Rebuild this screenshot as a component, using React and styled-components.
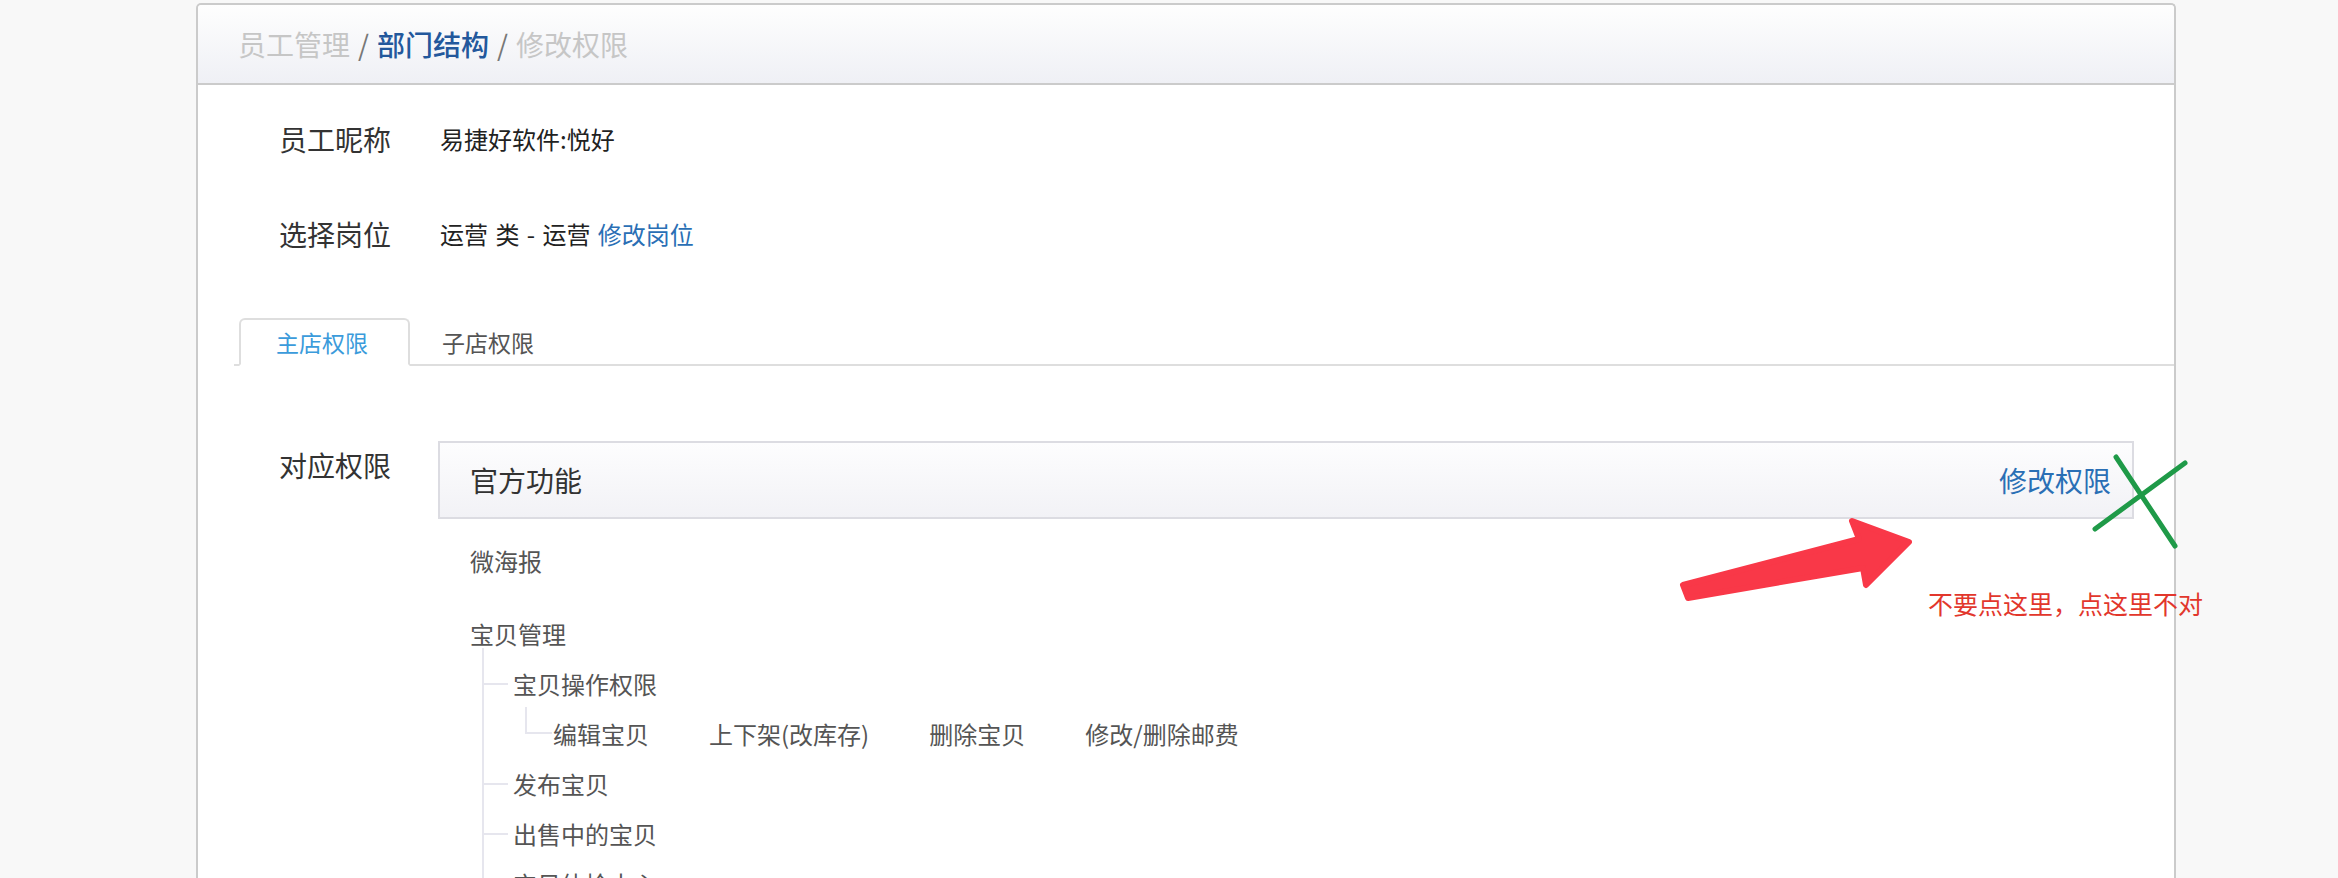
import React from 'react'
import styled, { createGlobalStyle } from 'styled-components'

const GlobalStyle = createGlobalStyle`
  html, body {
    margin: 0;
    padding: 0;
    background: #f8f8f8;
  }
  body {
    font-family: "Noto Sans CJK SC", "Noto Sans", sans-serif;
    overflow: hidden;
  }
`

const Page = styled.div`
  position: relative;
  height: 878px;
  overflow: hidden;
  padding-top: 3px;
  box-sizing: border-box;
`

const Panel = styled.section`
  margin-left: 196px;
  width: 1980px;
  min-height: 900px;
  background: #fff;
  border: 2px solid #cbcbcb;
  border-bottom: none;
  border-radius: 5px 5px 0 0;
  box-sizing: border-box;
`

const Header = styled.header`
  display: flex;
  align-items: center;
  height: 78px;
  padding-left: 40px;
  border-bottom: 2px solid #cbcbcb;
  border-radius: 4px 4px 0 0;
  background: linear-gradient(#fefefe, #eff0f5);
  font-size: 28px;
  line-height: 1;
`

const Crumb = styled.span`
  color: ${(p) => (p.$current ? '#23589c' : '#c6c6c6')};
  font-weight: ${(p) => (p.$current ? 500 : 400)};
`

const Slash = styled.span`
  color: #777;
  margin: 0 8px;
`

const Body = styled.div`
  padding: 6px 0 0 36px;
`

const FieldRow = styled.div`
  display: flex;
  align-items: center;
  height: 95px;
`

const Label = styled.div`
  width: 206px;
  padding-left: 45px;
  box-sizing: border-box;
  flex-shrink: 0;
  font-size: 28px;
  line-height: 48px;
  color: #333;
`

const Value = styled.div`
  font-size: 24px;
  color: #222;
  word-spacing: 2px;
`

const Link = styled.a`
  color: #2a6fb5;
  text-decoration: none;
  cursor: pointer;
`

const TabList = styled.div`
  display: flex;
  height: 46px;
  margin-top: 37px;
  border-bottom: 2px solid #dedede;
`

const Tab = styled.div`
  height: 48px;
  margin-bottom: -2px;
  padding: 0 30px;
  box-sizing: border-box;
  border: 2px solid transparent;
  border-radius: 6px 6px 0 0;
  font-size: 23px;
  line-height: 44px;
  color: #555;
  ${(p) =>
    p.$active &&
    `
    margin-left: 5px;
    padding: 0 40px 0 35px;
    border-color: #dedede;
    border-bottom-color: #fff;
    background: #fff;
    color: #3b9bdb;
  `}
`

const PermRow = styled.div`
  display: flex;
  align-items: flex-start;
  margin-top: 75px;
`

const PermContent = styled.div`
  flex: 1;
  margin-left: -2px;
  margin-right: 40px;
`

const GroupBox = styled.div`
  display: flex;
  align-items: center;
  justify-content: space-between;
  height: 78px;
  box-sizing: border-box;
  padding: 0 21px 0 30px;
  border: 2px solid #dcdce2;
  background: linear-gradient(#fdfdfe, #f2f2f6);
  font-size: 28px;
`

const GroupTitle = styled.span`
  color: #333;
`

const Tree = styled.div`
  padding-left: 32px;
  font-size: 24px;
  color: #555;
`

const TreeItem = styled.div`
  line-height: 50px;
  margin-top: ${(p) => p.$gap || 0}px;
`

const ChildList = styled.div`
  position: relative;
  margin-left: 12px;
  padding-left: 31px;

  &::before {
    content: '';
    position: absolute;
    left: 0;
    top: -11px;
    bottom: 0;
    width: 2px;
    background: #e6e6ee;
  }
`

const ChildItem = styled.div`
  position: relative;
  line-height: 50px;

  &::before {
    content: '';
    position: absolute;
    left: -29px;
    top: 24px;
    width: 24px;
    height: 2px;
    background: #e6e6ee;
  }
`

const GrandRow = styled.div`
  position: relative;
  display: flex;
  gap: 60px;
  padding-left: 40px;
  line-height: 50px;

  &::before {
    content: '';
    position: absolute;
    left: 12px;
    top: -2px;
    width: 25px;
    height: 25px;
    border-left: 2px solid #e6e6ee;
    border-bottom: 2px solid #e6e6ee;
  }
`

const Overlay = styled.svg`
  position: absolute;
  left: 0;
  top: 0;
  pointer-events: none;
`

const Note = styled.div`
  position: absolute;
  left: 1928px;
  top: 587px;
  font-size: 25px;
  line-height: 32px;
  color: #e2372c;
  white-space: nowrap;
`

const children = ['发布宝贝', '出售中的宝贝', '宝贝体检中心']
const operations = ['编辑宝贝', '上下架(改库存)', '删除宝贝', '修改/删除邮费']

export default function App() {
  return (
    <Page>
      <GlobalStyle />
      <Panel>
        <Header>
          <Crumb>员工管理</Crumb>
          <Slash>/</Slash>
          <Crumb $current>部门结构</Crumb>
          <Slash>/</Slash>
          <Crumb>修改权限</Crumb>
        </Header>
        <Body>
          <FieldRow>
            <Label>员工昵称</Label>
            <Value>易捷好软件:悦好</Value>
          </FieldRow>
          <FieldRow>
            <Label>选择岗位</Label>
            <Value>
              运营 类 - 运营 <Link>修改岗位</Link>
            </Value>
          </FieldRow>
          <TabList>
            <Tab $active>主店权限</Tab>
            <Tab>子店权限</Tab>
          </TabList>
          <PermRow>
            <Label>对应权限</Label>
            <PermContent>
              <GroupBox>
                <GroupTitle>官方功能</GroupTitle>
                <Link>修改权限</Link>
              </GroupBox>
              <Tree>
                <TreeItem $gap={17}>微海报</TreeItem>
                <TreeItem $gap={23}>宝贝管理</TreeItem>
                <ChildList>
                  <ChildItem>
                    宝贝操作权限
                    <GrandRow>
                      {operations.map((op) => (
                        <span key={op}>{op}</span>
                      ))}
                    </GrandRow>
                  </ChildItem>
                  {children.map((c) => (
                    <ChildItem key={c}>{c}</ChildItem>
                  ))}
                </ChildList>
              </Tree>
            </PermContent>
          </PermRow>
        </Body>
      </Panel>

      <Overlay width="2338" height="878" viewBox="0 0 2338 878">
        <path
          d="M1683 585 L1859 539 L1852 521 L1909 542 L1866 585 L1863 568 L1688 598 Z"
          fill="#f93848"
          stroke="#f93848"
          strokeWidth="6"
          strokeLinejoin="round"
        />
        <g stroke="#1f9a48" strokeWidth="5" strokeLinecap="round" fill="none">
          <path d="M2116 457 L2175 546" />
          <path d="M2185 463 L2095 529" />
        </g>
      </Overlay>
      <Note>不要点这里，点这里不对</Note>
    </Page>
  )
}
